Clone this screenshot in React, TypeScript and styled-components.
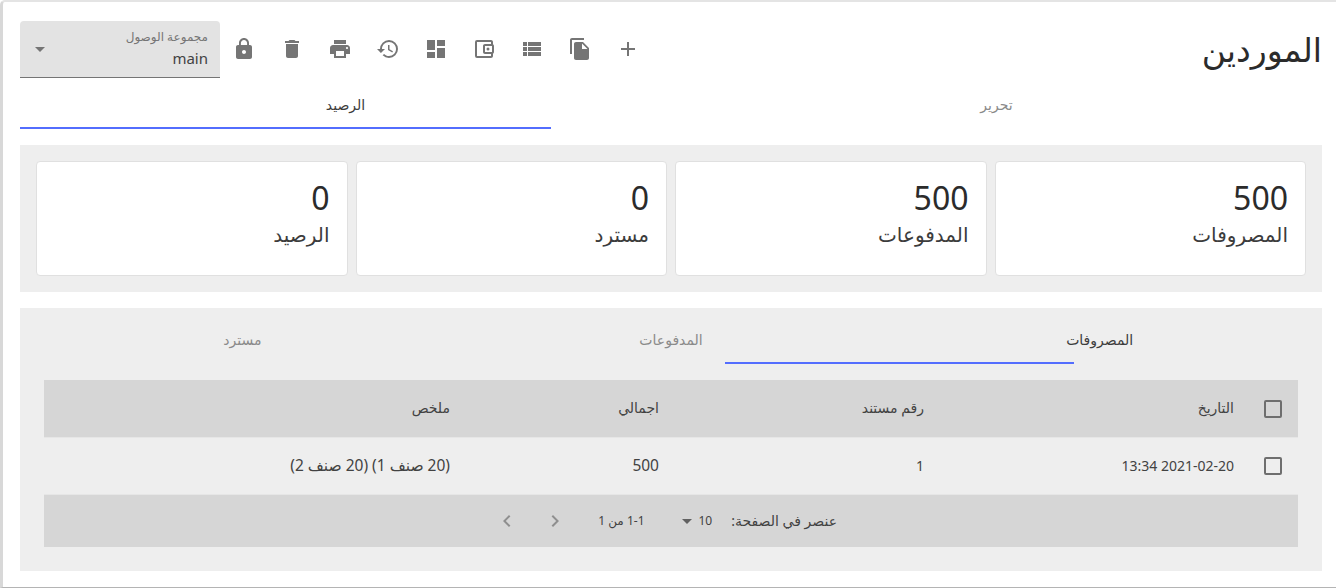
import React from "react";
import { createGlobalStyle, styled } from "styled-components";
import {
  MdAdd,
  MdArrowDropDown,
  MdChevronLeft,
  MdChevronRight,
  MdDashboard,
  MdDelete,
  MdFileCopy,
  MdHistory,
  MdLock,
  MdOutlineAccountBalanceWallet,
  MdPrint,
  MdViewList,
} from "react-icons/md";

const GlobalStyle = createGlobalStyle`
  html, body {
    margin: 0;
    height: 100%;
    background: #fff;
    overflow: hidden;
  }
  body {
    font-family: "Noto Sans", "Open Sans", "DejaVu Sans", sans-serif;
    color: rgba(0, 0, 0, 0.87);
  }
`;

const stats = [
  { value: "500", label: "المصروفات" },
  { value: "500", label: "المدفوعات" },
  { value: "0", label: "مسترد" },
  { value: "0", label: "الرصيد" },
];

const toolbarIcons = [
  MdAdd,
  MdFileCopy,
  MdViewList,
  MdOutlineAccountBalanceWallet,
  MdDashboard,
  MdHistory,
  MdPrint,
  MdDelete,
  MdLock,
];

const App = () => {
  return (
    <Page dir="rtl">
      <GlobalStyle />
      <Header>
        <Title>الموردين</Title>
        <Toolbar>
          {toolbarIcons.map((Icon, index) => (
            <ToolButton key={index}>
              <Icon size={24} />
            </ToolButton>
          ))}
          <AccessSelect>
            <AccessText>
              <AccessLabel>مجموعة الوصول</AccessLabel>
              <AccessValue>main</AccessValue>
            </AccessText>
            <MdArrowDropDown size={24} color="#757575" />
          </AccessSelect>
        </Toolbar>
      </Header>

      <MainTabs>
        <MainTab>تحرير</MainTab>
        <MainTab active>
          الرصيد
          <MainIndicator />
        </MainTab>
      </MainTabs>

      <StatsPanel>
        {stats.map((stat, index) => (
          <StatCard key={index}>
            <StatValue>{stat.value}</StatValue>
            <StatLabel>{stat.label}</StatLabel>
          </StatCard>
        ))}
      </StatsPanel>

      <TablePanel>
        <InnerTabs>
          <InnerTab active>
            المصروفات
            <InnerIndicator />
          </InnerTab>
          <InnerTab>المدفوعات</InnerTab>
          <InnerTab>مسترد</InnerTab>
        </InnerTabs>

        <Table>
          <HeadRow>
            <CheckCell>
              <CheckBox />
            </CheckCell>
            <span>التاريخ</span>
            <span>رقم مستند</span>
            <span>اجمالي</span>
            <span>ملخص</span>
          </HeadRow>
          <BodyRow>
            <CheckCell>
              <CheckBox />
            </CheckCell>
            <span>2021-02-20 13:34</span>
            <span>1</span>
            <WideCell>500</WideCell>
            <WideCell>(20 صنف 1) (20 صنف 2)</WideCell>
          </BodyRow>
          <Pagination>
            <span>عنصر في الصفحة:</span>
            <PageSize>
              10
              <MdArrowDropDown size={24} color="#616161" />
            </PageSize>
            <PageRange>1-1 من 1</PageRange>
            <PageArrows>
              <MdChevronRight size={24} />
              <MdChevronLeft size={24} />
            </PageArrows>
          </Pagination>
        </Table>
      </TablePanel>
    </Page>
  );
};

export default App;

const Page = styled.div`
  box-sizing: border-box;
  width: 1336px;
  height: 588px;
  padding: 19px 14px 0 17px;
  background: #fff;
  border-top: 2px solid #e4e4e4;
  border-left: 3px solid #d8d8d8;
  border-bottom: 1px solid #b4b4b4;
  border-top-left-radius: 5px;
`;

const Header = styled.div`
  display: flex;
  align-items: center;
  justify-content: space-between;
  height: 57px;
`;

const Title = styled.h1`
  margin: 0;
  font-size: 33px;
  font-weight: 400;
  line-height: 57px;
  color: #2b2b2b;
`;

const Toolbar = styled.div`
  display: flex;
  align-items: center;
`;

const ToolButton = styled.div`
  display: flex;
  align-items: center;
  justify-content: center;
  width: 48px;
  height: 48px;
  margin-top: -1px;
  color: #757575;
`;

const AccessSelect = styled.div`
  box-sizing: border-box;
  display: flex;
  align-items: center;
  justify-content: space-between;
  width: 200px;
  height: 57px;
  padding: 0 12px 0 8px;
  background: #e3e3e3;
  border-bottom: 1px solid #757575;
  border-radius: 4px 4px 0 0;
`;

const AccessText = styled.div`
  display: flex;
  flex-direction: column;
  gap: 3px;
  padding-bottom: 2px;
`;

const AccessLabel = styled.span`
  font-size: 12px;
  line-height: 16px;
  color: #757575;
`;

const AccessValue = styled.span`
  font-size: 15px;
  line-height: 20px;
  color: #424242;
`;

const MainTabs = styled.div`
  display: grid;
  grid-template-columns: 1fr 1fr;
  height: 48px;
  margin-top: 3px;
`;

const MainTab = styled.div<{ active?: boolean }>`
  position: relative;
  display: flex;
  align-items: center;
  justify-content: center;
  height: 48px;
  padding-bottom: 2px;
  box-sizing: border-box;
  font-size: 14px;
  color: ${({ active }) => (active ? "#3c3c3c" : "#8a8a8a")};
`;

const MainIndicator = styled.div`
  position: absolute;
  left: 0;
  bottom: 0;
  width: 531px;
  height: 2px;
  background: #536dfe;
`;

const StatsPanel = styled.div`
  display: grid;
  grid-template-columns: repeat(4, 1fr);
  gap: 8px;
  height: 147px;
  box-sizing: border-box;
  margin-top: 16px;
  padding: 16px;
  background: #eee;
`;

const StatCard = styled.div`
  box-sizing: border-box;
  height: 115px;
  padding: 16px 17px;
  background: #fff;
  border: 1px solid #e0e0e0;
  border-radius: 4px;
`;

const StatValue = styled.div`
  font-size: 32px;
  line-height: 40px;
  color: #2b2b2b;
`;

const StatLabel = styled.div`
  margin-top: 2px;
  font-size: 20px;
  line-height: 30px;
  color: #3c3c3c;
`;

const TablePanel = styled.div`
  box-sizing: border-box;
  height: 263px;
  margin-top: 16px;
  padding: 8px 8px 0;
  background: #eee;
`;

const InnerTabs = styled.div`
  display: grid;
  grid-template-columns: repeat(3, 1fr);
  height: 48px;
`;

const InnerTab = styled.div<{ active?: boolean }>`
  position: relative;
  display: flex;
  align-items: center;
  justify-content: center;
  padding-bottom: 2px;
  font-size: 14px;
  color: ${({ active }) => (active ? "#3c3c3c" : "#8a8a8a")};
`;

const InnerIndicator = styled.div`
  position: absolute;
  right: 240px;
  bottom: 0;
  width: 349px;
  height: 2px;
  background: #536dfe;
`;

const Table = styled.div`
  margin: 16px 16px 0;
  font-size: 14px;
  color: #424242;
`;

const HeadRow = styled.div`
  display: grid;
  grid-template-columns: 64px 310px 265px 209px 1fr;
  align-items: center;
  height: 58px;
  background: #d6d6d6;
  border-bottom: 1px solid #e6e6e6;
  box-sizing: border-box;

  > span {
    padding-bottom: 2px;
  }
`;

const BodyRow = styled(HeadRow)`
  height: 57px;
  background: #eee;
`;

const WideCell = styled.span`
  font-size: 15.5px;
`;

const CheckCell = styled.div`
  display: flex;
  padding-right: 16px;
`;

const CheckBox = styled.div`
  box-sizing: border-box;
  width: 18px;
  height: 18px;
  border: 2px solid #6e6e6e;
  border-radius: 2px;
`;

const Pagination = styled.div`
  box-sizing: border-box;
  display: flex;
  align-items: center;
  height: 52px;
  padding: 0 461px 1px 0;
  background: #d6d6d6;
`;

const PageSize = styled.div`
  display: flex;
  align-items: center;
  margin-right: 19px;
  font-size: 12px;
`;

const PageRange = styled.span`
  margin-right: 30px;
  font-size: 12px;
`;

const PageArrows = styled.div`
  display: flex;
  gap: 24px;
  margin-right: 31px;
  color: #8f8f8f;
`;
